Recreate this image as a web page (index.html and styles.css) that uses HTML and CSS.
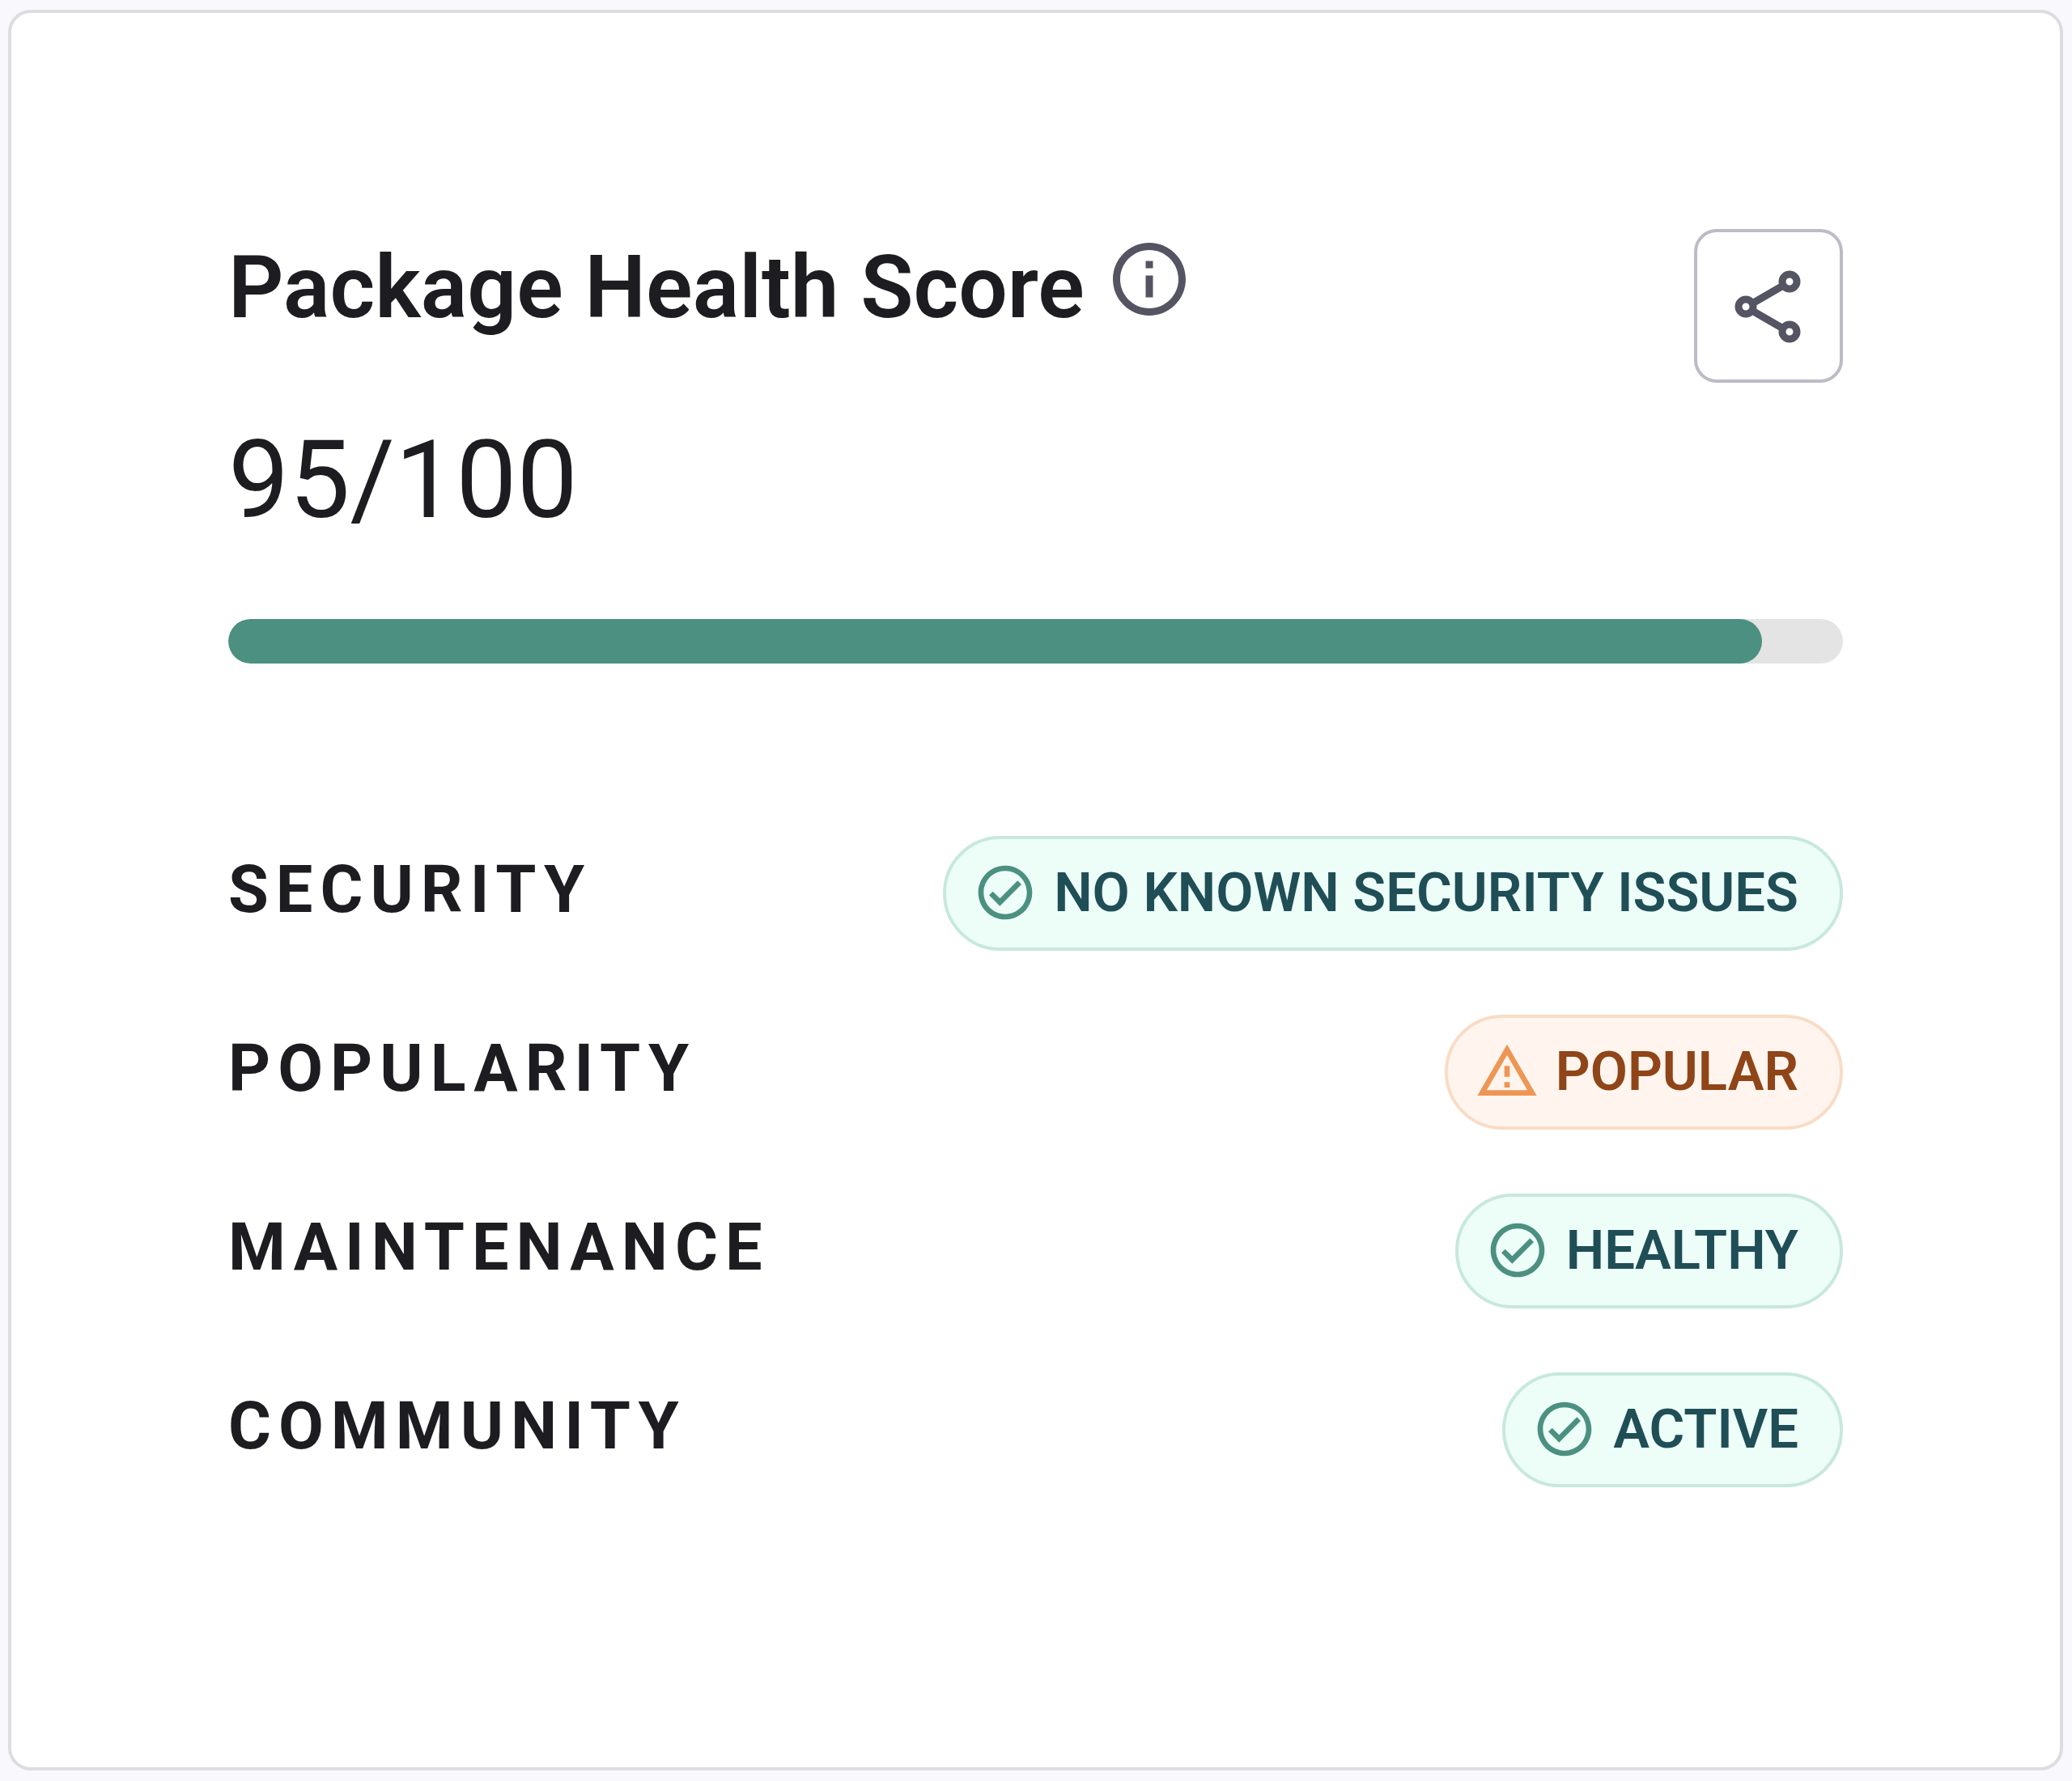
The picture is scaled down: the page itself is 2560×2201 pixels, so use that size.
FILE: index.html
```html
<!DOCTYPE html>
<html lang="en">
<head>
  <meta charset="utf-8">
  <meta name="viewport" content="width=device-width, initial-scale=1">
  <title>Package Health Score</title>
  <link rel="stylesheet" href="styles.css">
</head>
<body class="page">
  <svg class="sprite" aria-hidden="true">
    <symbol id="icon-check" viewBox="0 0 24 24">
      <path d="M12 2C6.48 2 2 6.48 2 12s4.48 10 10 10 10-4.48 10-10S17.52 2 12 2zm0 18c-4.41 0-8-3.59-8-8s3.59-8 8-8 8 3.59 8 8-3.59 8-8 8zm4.59-12.42L10 14.17l-2.59-2.58L6 13l4 4 8-8-1.410-1.420z"/>
    </symbol>
    <symbol id="icon-warning" viewBox="0 0 24 24">
      <path d="M12 5.990L19.530 19H4.470L12 5.990M12 2L1 21h22L12 2zm1 14h-2v2h2v-2zm0-6h-2v4h2v-4z"/>
    </symbol>
  </svg>

  <main class="card">
    <header class="card-header">
      <div class="heading">
        <h1 class="title" id="score-title">Package Health Score</h1>
        <button class="info-button" type="button" aria-label="About the score">
          <svg class="info-icon" viewBox="0 0 24 24" aria-hidden="true">
            <path d="M11 7h2v2h-2zm0 4h2v6h-2zm1-9C6.480 2 2 6.480 2 12s4.480 10 10 10 10-4.480 10-10S17.520 2 12 2zm0 18c-4.410 0-8-3.590-8-8s3.590-8 8-8 8 3.590 8 8-3.590 8-8 8z"/>
          </svg>
        </button>
      </div>
      <button class="share-button" type="button" aria-label="Share">
        <svg class="share-icon" viewBox="0 0 100 100" aria-hidden="true">
          <path d="M30 47L68 25M30 56L68 78"/>
          <circle cx="22" cy="51" r="9"/>
          <circle cx="76" cy="20" r="9"/>
          <circle cx="76" cy="82" r="9"/>
        </svg>
      </button>
    </header>

    <p class="score">95/100</p>
    <div class="meter" role="progressbar" aria-labelledby="score-title" aria-valuemin="0" aria-valuemax="100" aria-valuenow="95">
      <div class="meter-fill" style="width: 95%"></div>
    </div>

    <dl class="factors">
      <div class="factor">
        <dt class="factor-name">SECURITY</dt>
        <dd class="badge badge-good"><svg class="badge-icon" aria-hidden="true"><use href="#icon-check"/></svg>NO KNOWN SECURITY ISSUES</dd>
      </div>
      <div class="factor">
        <dt class="factor-name">POPULARITY</dt>
        <dd class="badge badge-warn"><svg class="badge-icon" aria-hidden="true"><use href="#icon-warning"/></svg>POPULAR</dd>
      </div>
      <div class="factor">
        <dt class="factor-name">MAINTENANCE</dt>
        <dd class="badge badge-good"><svg class="badge-icon" aria-hidden="true"><use href="#icon-check"/></svg>HEALTHY</dd>
      </div>
      <div class="factor">
        <dt class="factor-name">COMMUNITY</dt>
        <dd class="badge badge-good"><svg class="badge-icon" aria-hidden="true"><use href="#icon-check"/></svg>ACTIVE</dd>
      </div>
    </dl>
  </main>
</body>
</html>
```

FILE: styles.css
```css
*,
*::before,
*::after {
  box-sizing: border-box;
}

.page {
  margin: 0;
  padding: 12px 11px 12px 10px;
  background: #f9f9fd;
  color: #1c1c21;
  font-family: Roboto, "Liberation Sans", sans-serif;
}

.sprite {
  position: absolute;
  width: 0;
  height: 0;
}

.card {
  padding: 267px 268px 346px;
  border: 4px solid #dcdce1;
  border-radius: 28px;
  background: #fff;
}

.card-header {
  display: flex;
  align-items: flex-start;
  justify-content: space-between;
}

.heading {
  display: flex;
  align-items: flex-start;
  gap: 26px;
}

.title {
  margin: 0;
  font-size: 107px;
  font-weight: 600;
  line-height: 146px;
}

.info-button {
  margin: 8px 0 0;
  padding: 0;
  border: 0;
  background: none;
  color: #555463;
}

.info-icon {
  display: block;
  width: 108px;
  height: 108px;
  fill: currentColor;
}

.share-button {
  display: flex;
  align-items: center;
  justify-content: center;
  width: 184px;
  height: 190px;
  padding: 0;
  border: 4px solid #bcbbc6;
  border-radius: 28px;
  background: #fff;
  color: #555463;
}

.share-icon {
  width: 100px;
  height: 100px;
  fill: none;
  stroke: currentColor;
  stroke-width: 9;
}

.score {
  margin: 40px 0 0;
  font-size: 134px;
  font-weight: 450;
  line-height: 162px;
}

.meter {
  height: 55px;
  margin-top: 90px;
  overflow: hidden;
  border-radius: 28px;
  background: #e4e4e4;
}

.meter-fill {
  height: 100%;
  border-radius: 28px;
  background: #4b9081;
}

.factors {
  display: grid;
  gap: 79px;
  margin: 213px 0 0;
}

.factor {
  display: flex;
  align-items: flex-start;
  justify-content: space-between;
}

.factor-name {
  font-size: 81px;
  font-weight: 750;
  line-height: 134px;
  letter-spacing: 9px;
}

.badge {
  display: flex;
  align-items: center;
  gap: 20px;
  height: 142px;
  margin: 0;
  padding: 0 51px 2px 33px;
  border: 4px solid;
  border-radius: 71px;
  font-size: 67px;
  font-weight: 600;
  line-height: 80px;
}

.badge-good {
  border-color: #c7e8de;
  background: #edfdf8;
  color: #1f4e56;
}

.badge-warn {
  border-color: #f9dcc6;
  background: #fff5ee;
  color: #8f4518;
}

.badge-icon {
  width: 80px;
  height: 80px;
}

.badge-good .badge-icon {
  fill: #4b9081;
}

.badge-warn .badge-icon {
  fill: #ee9654;
}
```
